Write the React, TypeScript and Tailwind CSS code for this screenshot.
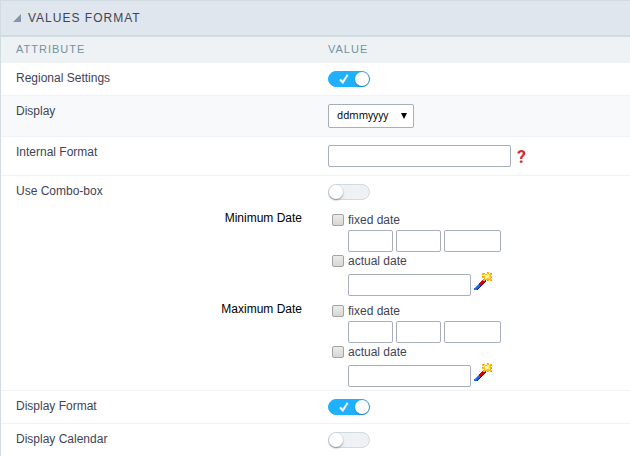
import React from "react";

function Toggle({ id, on = false }: { id: string; on?: boolean }) {
  return (
    <span className="relative block h-4 w-[42px]">
      <input
        id={id}
        type="checkbox"
        role="switch"
        defaultChecked={on}
        className="peer block h-4 w-[42px] cursor-pointer appearance-none rounded-full border border-[#cfdae1] bg-[#eef2f5] checked:border-[#1fb0ff] checked:bg-[#1fb0ff]"
      />
      <span className="pointer-events-none absolute top-px left-px size-3.5 rounded-full bg-white shadow-[0_1px_2px_rgba(60,80,100,0.6)] peer-checked:left-[27px]" />
      <svg
        viewBox="0 0 10 10"
        className="pointer-events-none absolute top-[3px] left-[11px] hidden size-[10px] peer-checked:block"
        fill="none"
        stroke="#fff"
        strokeWidth="2"
        aria-hidden="true"
      >
        <path d="M1 5.5 L3.8 8.3 L8.7 0.8" />
      </svg>
    </span>
  );
}

function Box({ label, width, id }: { label: string; width: string; id?: string }) {
  return (
    <input
      id={id}
      type="text"
      aria-label={label}
      className={`block h-[22px] rounded-xs border border-[#a7afbd] bg-white px-1 text-[#3f4455] ${width}`}
    />
  );
}

function Wand() {
  return (
    <svg viewBox="0 0 18 18" className="size-[18px]" shapeRendering="crispEdges" aria-hidden="true">
      <path d="M0 16h1v-1h1v-1h1v-1h1v-1h1v-1h2v2h1v1h-1v1h-1v1h-1v1h-1v1h-4z" fill="#1a66f0" />
      <path d="M1 15h1v-1h1v-1h1v-1h1v1h-1v1h-1v1h-1v1h-1z" fill="#4fa6ff" />
      <path d="M3 17h1v-1h1v-1h1v-1h1v1h-1v1h-1v1h-1v1h-1z" fill="#1010b0" />
      <path d="M5 11h1v-1h1v-1h1v-1h1v-1h2v1h1v1h-1v1h-1v1h-1v1h-1v1h-1v1h-1v-1h-1z" fill="#c80000" />
      <path d="M6 11h1v-1h1v-1h1v-1h1v1h-1v1h-1v1h-1v1h-1z" fill="#f00000" />
      <path d="M7 13h1v-1h1v-1h1v-1h1v-1h1v1h-1v1h-1v1h-1v1h-1v1h-1z" fill="#700010" />
      <path d="M8 1h3v1h2v-2h2v2h1v-1h2v2h-1v1h1v2h-1v1h1v2h-2v-1h-1v1h-2v-1h-2v1h-2v-2h1v-1h-2v-2h2v-1h-2z" fill="#ffb828" />
      <path d="M10 2h1v1h2v-1h2v1h1v1h-1v1h1v2h-1v-1h-2v1h-2v-2h1v-1h-2v-1z" fill="#fff04a" />
      <path d="M12 3h1v1h2v1h-1v1h-2v-1h-1v-1h1z" fill="#fffbc0" />
      <path d="M9 1h1v1h-1zM13 0h1v1h-1zM17 1h1v1h-1zM8 4h1v1h-1zM17 5h1v1h-1zM9 7h1v1h-1zM13 8h1v1h-1zM17 8h1v1h-1z" fill="#ff8a00" />
    </svg>
  );
}

function Check({ label, height }: { label: string; height: string }) {
  return (
    <label className={`flex items-center gap-1 ${height}`}>
      <input
        type="checkbox"
        className="ml-1 size-3 appearance-none rounded-xs border border-[#a3a3a3] bg-linear-to-b from-[#ececec] to-[#d6d6d6] checked:bg-[#1fb0ff]"
      />
      {label}
    </label>
  );
}

function DateLimit({ name, last = false }: { name: string; last?: boolean }) {
  return (
    <tr className={last ? "border-b border-[#eef2f5]" : ""}>
      <th scope="row" className="pr-[26px] text-right align-top font-normal text-black">
        <span className="block leading-4">{name}</span>
      </th>
      <td className={last ? "pb-[3px]" : "pb-[5px]"}>
        <Check label="fixed date" height="h-5" />
        <div className="flex gap-[3px] pl-5">
          <Box label={`${name} day`} width="w-[45px]" />
          <Box label={`${name} month`} width="w-[45px]" />
          <Box label={`${name} year`} width="w-[57px]" />
        </div>
        <Check label="actual date" height="h-[18px]" />
        <div className="flex items-start gap-[3px] pt-0.5 pl-5">
          <div className="pt-0.5">
            <Box label={`${name} offset`} width="w-[123px]" />
          </div>
          <button type="button" aria-label={`${name} wizard`}>
            <Wand />
          </button>
        </div>
      </td>
    </tr>
  );
}

function Row({
  label,
  id,
  children,
  tint = "",
  pad = "pb-2",
  line = true,
}: {
  label: string;
  id: string;
  children: React.ReactNode;
  tint?: string;
  pad?: string;
  line?: boolean;
}) {
  return (
    <tr className={`${line ? "border-b border-[#eef2f5]" : ""} ${tint}`}>
      <th scope="row" className="pt-[7px] pl-[15px] text-left align-top font-normal">
        <label htmlFor={id} className="block leading-4">
          {label}
        </label>
      </th>
      <td className={`pt-2 align-top ${pad}`}>{children}</td>
    </tr>
  );
}

export default function App() {
  return (
    <main className="min-h-screen border-t border-l border-[#d0dbe2] bg-white font-['Liberation_Sans',Arial,sans-serif] text-xs text-[#3f4455]">
      <h2 className="border-b-2 border-[#d0dbe2] bg-[#dfe6ee] pl-3">
        <button type="button" className="flex h-[34px] items-center gap-[7px] font-normal tracking-[1px]">
          <svg viewBox="0 0 8 8" className="size-2" aria-hidden="true">
            <path d="M8 0V8H0z" fill="#8595aa" />
          </svg>
          VALUES FORMAT
        </button>
      </h2>
      <table className="w-full table-fixed border-collapse">
        <colgroup>
          <col className="w-[327px]" />
          <col />
        </colgroup>
        <thead className="bg-[#eef2f5] text-left text-[11px] tracking-[1px] text-[#7193a3]">
          <tr className="h-[26px]">
            <th scope="col" className="pb-0.5 pl-[15px] font-normal">ATTRIBUTE</th>
            <th scope="col" className="pb-0.5 font-normal">VALUE</th>
          </tr>
        </thead>
        <tbody>
          <Row label="Regional Settings" id="regional">
            <Toggle id="regional" on />
          </Row>
          <Row label="Display" id="display" tint="bg-[#f8f9fb]">
            <span className="relative block w-[86px]">
              <select
                id="display"
                className="block h-6 w-full appearance-none rounded-xs border border-[#a7afbd] bg-white pl-2 font-['Noto_Sans',sans-serif] text-[10px] text-black"
              >
                <option>ddmmyyyy</option>
                <option>mmddyyyy</option>
                <option>yyyymmdd</option>
              </select>
              <svg viewBox="0 0 6 6" className="pointer-events-none absolute top-[9px] right-[7px] size-1.5" aria-hidden="true">
                <path d="M0 0H6L3 6z" fill="#000" />
              </svg>
            </span>
          </Row>
          <Row label="Internal Format" id="internal">
            <div className="flex items-center gap-1.5">
              <Box label="Internal Format" id="internal" width="w-[183px]" />
              <button type="button" aria-label="Help" className="h-[22px] font-['Roboto',sans-serif] text-lg leading-6 font-bold text-[#d62b36]">
                ?
              </button>
            </div>
          </Row>
          <Row label="Use Combo-box" id="combo" pad="pb-2.5" line={false}>
            <Toggle id="combo" />
          </Row>
          <DateLimit name="Minimum Date" />
          <DateLimit name="Maximum Date" last />
          <Row label="Display Format" id="format">
            <Toggle id="format" on />
          </Row>
          <Row label="Display Calendar" id="calendar" line={false}>
            <Toggle id="calendar" />
          </Row>
        </tbody>
      </table>
    </main>
  );
}
